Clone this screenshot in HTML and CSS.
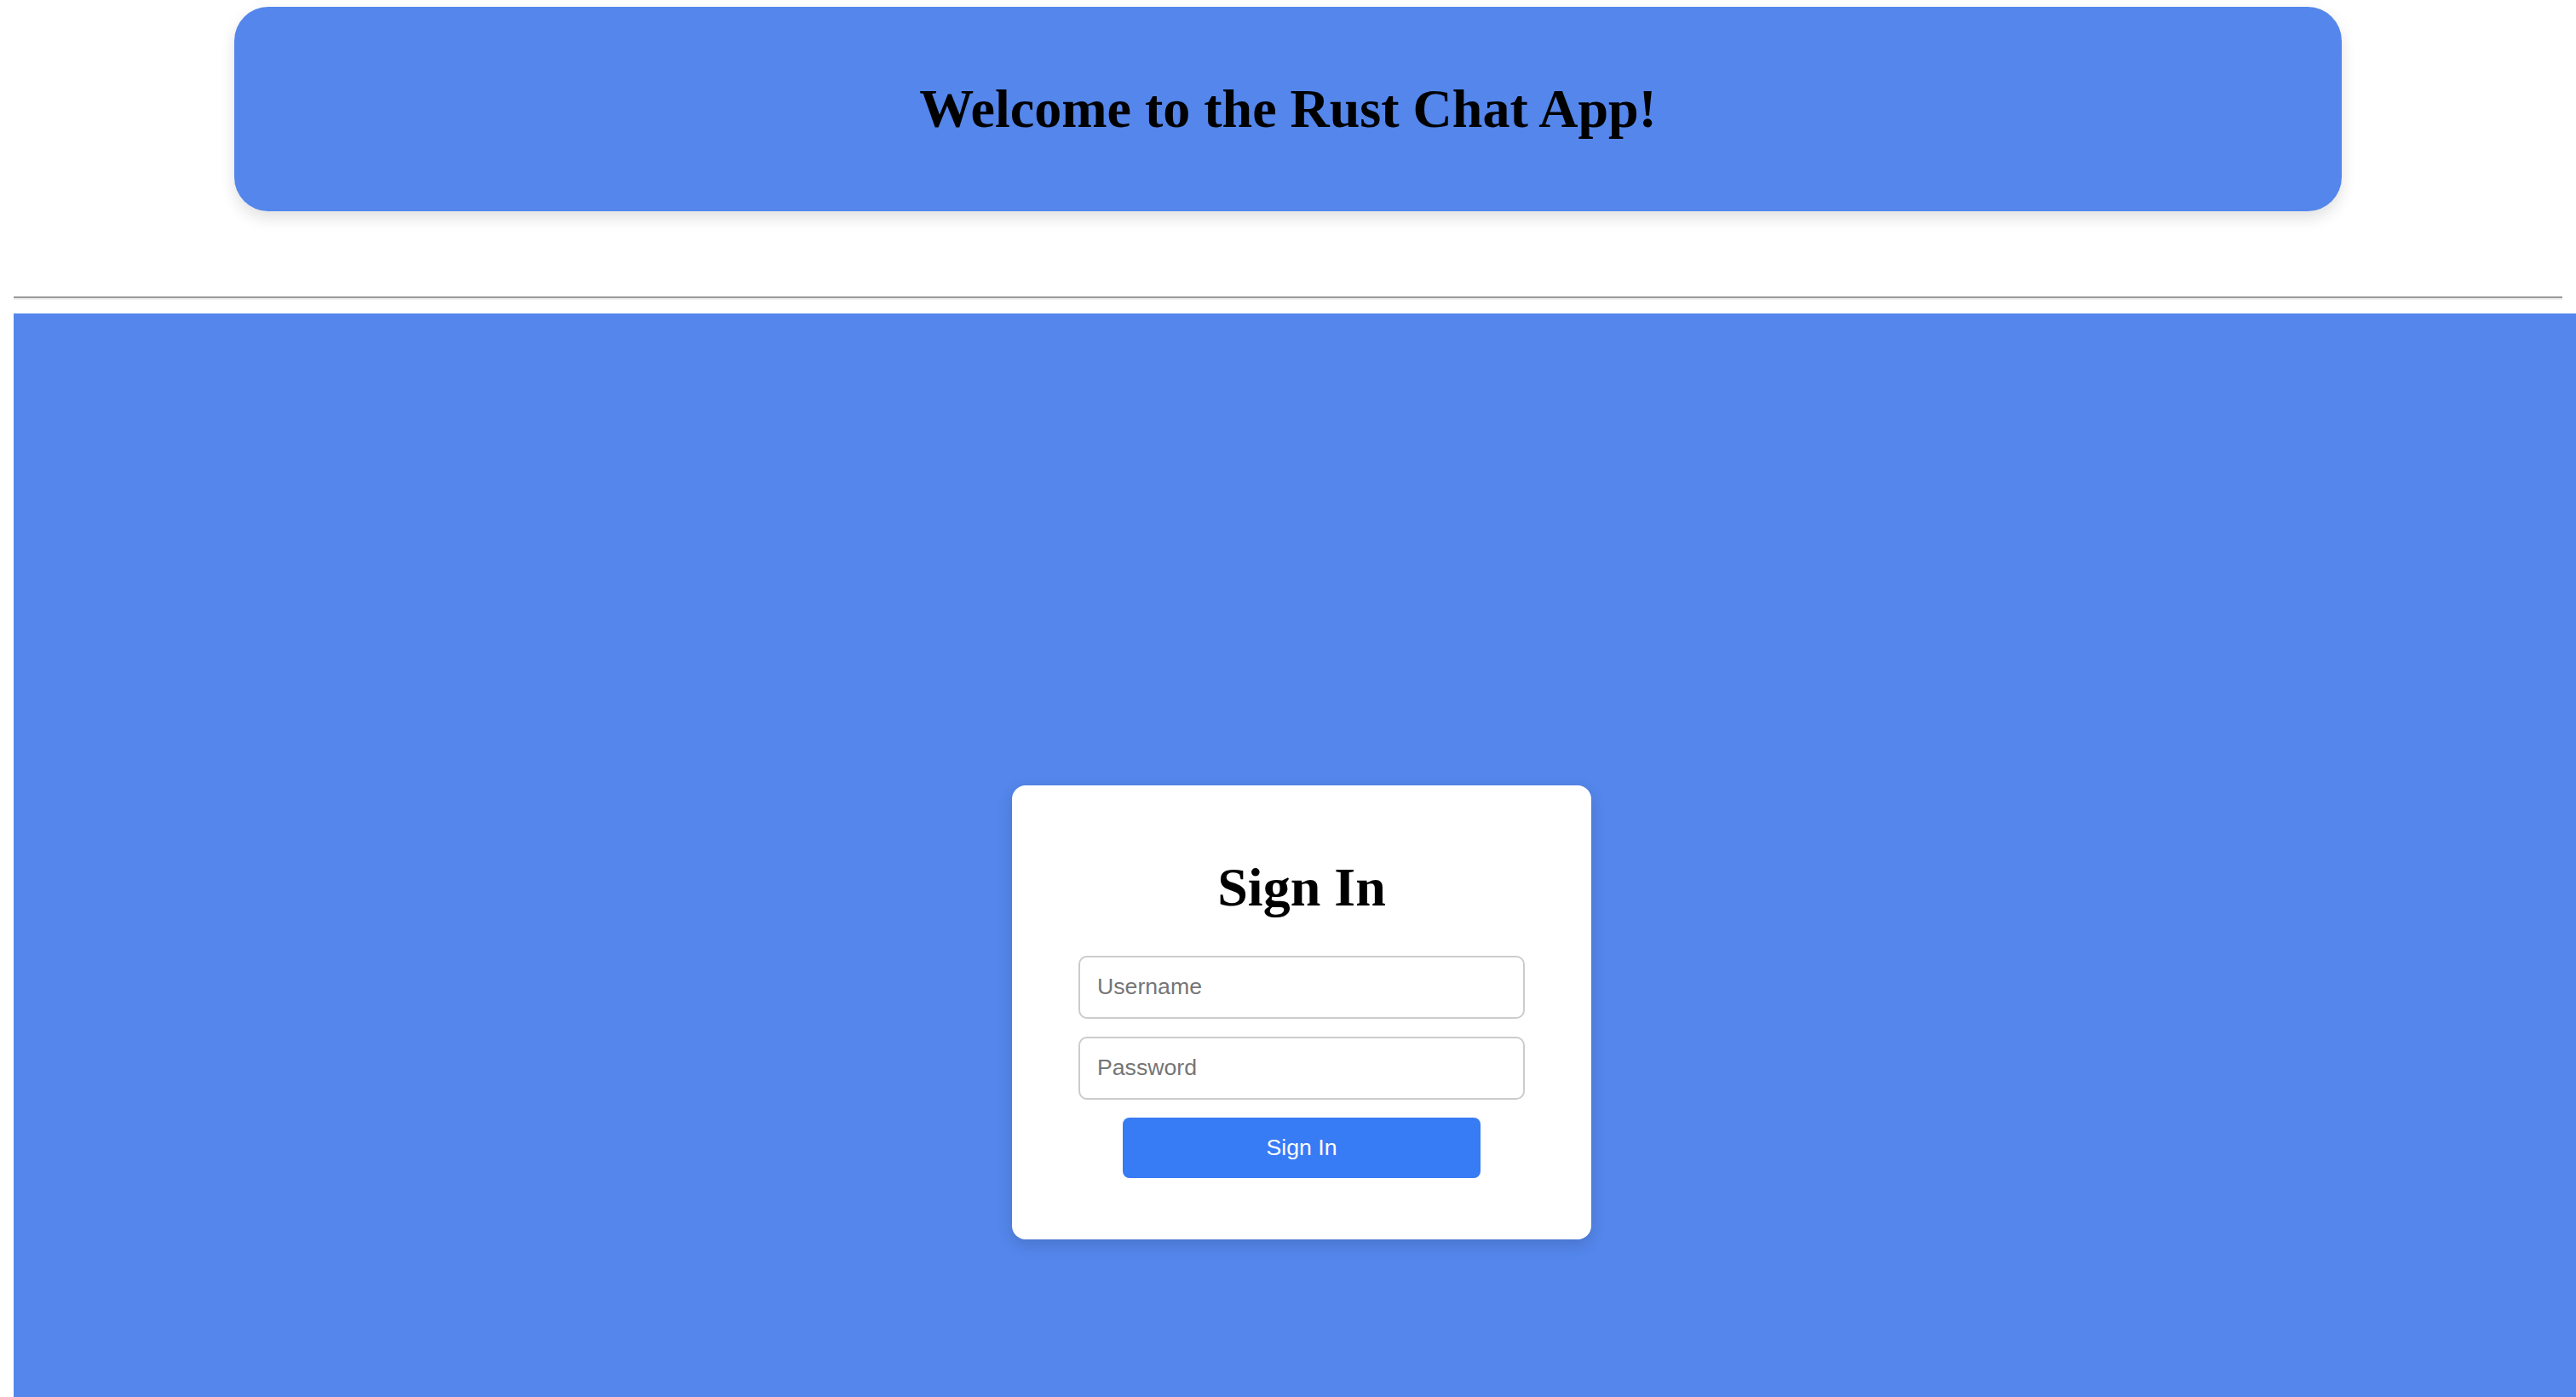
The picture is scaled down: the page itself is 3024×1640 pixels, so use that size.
FILE: index.html
```html
<!DOCTYPE html>
<html lang="en">
<head>
<meta charset="utf-8">
<title>Rust Chat App</title>
<link rel="stylesheet" href="styles.css">
</head>
<body>
  <div class="top">
    <header class="banner">
      <h1 class="banner-title">Welcome to the Rust Chat App!</h1>
    </header>
    <hr class="divider">
  </div>
  <main class="stage">
    <form class="card">
      <h1 class="card-title">Sign In</h1>
      <input class="field" type="text" placeholder="Username">
      <input class="field" type="password" placeholder="Password">
      <button class="btn" type="button">Sign In</button>
    </form>
  </main>
</body>
</html>
```
FILE: styles.css
```css
html {
  overflow: hidden;
}

body {
  margin: 0 0 0 16px;
  font-family: "Liberation Serif", "Times New Roman", serif;
  color: #000;
  background: #fff;
}

.top {
  margin-right: 16px;
}

.banner {
  width: 80%;
  margin: 8px auto 0;
  padding: 40px;
  background: #5486eb;
  border-radius: 40px;
  box-shadow: 0 8px 18px rgba(0, 0, 0, 0.12);
}

.banner-title {
  margin: 43px 0;
  font-size: 64px;
  font-weight: bold;
  line-height: normal;
  text-align: center;
}

.divider {
  margin: 100px 0 16px;
  height: 0;
  border: 0;
  border-top: 2px solid #9a9a9a;
  border-bottom: 2px solid #eeeeee;
}

.stage {
  box-sizing: border-box;
  padding-left: 16px;
  height: 1640px;
  background: #5486eb;
  display: flex;
  align-items: center;
  justify-content: center;
}

.card {
  width: 600px;
  padding: 40px;
  background: #fff;
  border-radius: 16px;
  box-shadow: 0 6px 18px rgba(0, 0, 0, 0.14);
  display: flex;
  flex-direction: column;
  align-items: center;
}

.card-title {
  margin: 43px 0;
  font-size: 64px;
  font-weight: bold;
  line-height: normal;
  text-align: center;
}

.field {
  box-sizing: content-box;
  width: 480px;
  height: 30px;
  padding: 20px;
  margin: 0 0 21px;
  border: 2px solid #cccccc;
  border-radius: 10px;
  font-family: "Liberation Sans", Arial, sans-serif;
  font-size: 26.67px;
  color: #000;
  background: #fff;
  outline: none;
}

.field::placeholder {
  color: #757575;
}

.btn {
  width: 420px;
  height: 71px;
  margin: 0 0 32px;
  border: 0;
  border-radius: 8px;
  background: #377bf5;
  color: #fff;
  font-family: "Liberation Sans", Arial, sans-serif;
  font-size: 26.67px;
  cursor: pointer;
}
```
